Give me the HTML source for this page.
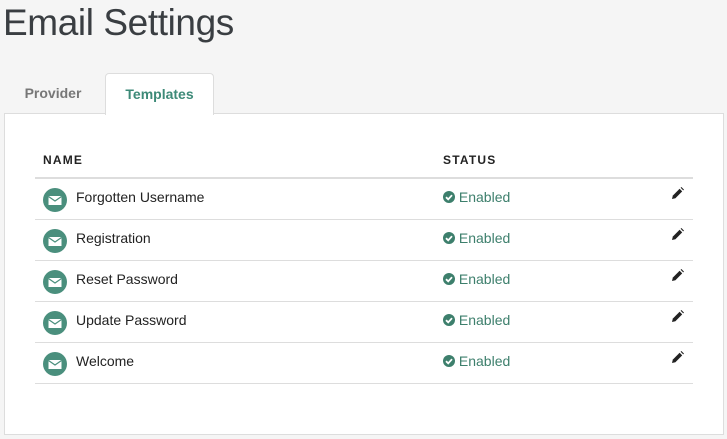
<!DOCTYPE html>
<html><head><style>
body{margin:0;background:#f5f5f5;font-family:"Liberation Sans",sans-serif;width:727px;height:439px;overflow:hidden;position:relative}
h1{position:absolute;left:3px;top:0;margin:0;font-weight:normal;font-size:37px;line-height:46px;color:#3a3e42;letter-spacing:-0.4px}
.tab{position:absolute;top:73px;height:41px;font-size:14px;font-weight:bold;line-height:41px;text-align:center}
.t1{left:4px;width:98px;color:#777}
.t2{left:105px;width:107px;background:#fff;border:1px solid #ddd;border-bottom:none;border-radius:4px 4px 0 0;color:#3d8a78;z-index:2}
.panel{position:absolute;left:4px;top:113px;width:718px;height:320px;background:#fff;border:1px solid #ddd}
.hdr{position:absolute;top:153px;font-size:12px;font-weight:bold;letter-spacing:1.2px;color:#222}
.hline{position:absolute;left:35px;width:658px;top:177px;height:2px;background:#ddd}
.row{position:absolute;left:35px;width:658px;height:40px;border-bottom:1px solid #ddd}
.ic{position:absolute;left:8px;top:9px;width:24px;height:24px;border-radius:50%;background:#4a8f7d}
.nm{position:absolute;left:41px;top:10px;font-size:14px;color:#222}
.st{position:absolute;left:408px;top:10px;font-size:14px;color:#3d7f6c}
.pen{position:absolute;left:636px;top:8px}
</style></head><body>
<h1>Email Settings</h1>
<div class="tab t1">Provider</div>
<div class="tab t2">Templates</div>
<div class="panel"></div>
<div class="hdr" style="left:43px">NAME</div>
<div class="hdr" style="left:443px">STATUS</div>
<div class="hline"></div>
<div class="row" style="top:179px"><div class="ic"><svg width="24" height="24"><rect x="5.5" y="8" width="13" height="9" fill="#fff"/><path d="M5.5 8.5 L12 13 L18.5 8.5" stroke="#4a8f7d" stroke-width="1.2" fill="none"/></svg></div><div class="nm">Forgotten Username</div><div class="st"><svg width="12" height="12" style="vertical-align:-1px"><circle cx="6" cy="6" r="6" fill="#3d7f6c"/><path d="M3 6.2 L5.2 8.3 L9 4.2" stroke="#fff" stroke-width="1.8" fill="none"/></svg> Enabled</div><svg class="pen" width="13" height="13"><path d="M1 12 L1.8 8.6 L8.6 1.8 L11.2 4.4 L4.4 11.2 Z" fill="#222"/><path d="M9.6 0.8 L10.4 0 L13 2.6 L12.2 3.4 Z" fill="#222"/></svg></div>
<div class="row" style="top:220px"><div class="ic"><svg width="24" height="24"><rect x="5.5" y="8" width="13" height="9" fill="#fff"/><path d="M5.5 8.5 L12 13 L18.5 8.5" stroke="#4a8f7d" stroke-width="1.2" fill="none"/></svg></div><div class="nm">Registration</div><div class="st"><svg width="12" height="12" style="vertical-align:-1px"><circle cx="6" cy="6" r="6" fill="#3d7f6c"/><path d="M3 6.2 L5.2 8.3 L9 4.2" stroke="#fff" stroke-width="1.8" fill="none"/></svg> Enabled</div><svg class="pen" width="13" height="13"><path d="M1 12 L1.8 8.6 L8.6 1.8 L11.2 4.4 L4.4 11.2 Z" fill="#222"/><path d="M9.6 0.8 L10.4 0 L13 2.6 L12.2 3.4 Z" fill="#222"/></svg></div>
<div class="row" style="top:261px"><div class="ic"><svg width="24" height="24"><rect x="5.5" y="8" width="13" height="9" fill="#fff"/><path d="M5.5 8.5 L12 13 L18.5 8.5" stroke="#4a8f7d" stroke-width="1.2" fill="none"/></svg></div><div class="nm">Reset Password</div><div class="st"><svg width="12" height="12" style="vertical-align:-1px"><circle cx="6" cy="6" r="6" fill="#3d7f6c"/><path d="M3 6.2 L5.2 8.3 L9 4.2" stroke="#fff" stroke-width="1.8" fill="none"/></svg> Enabled</div><svg class="pen" width="13" height="13"><path d="M1 12 L1.8 8.6 L8.6 1.8 L11.2 4.4 L4.4 11.2 Z" fill="#222"/><path d="M9.6 0.8 L10.4 0 L13 2.6 L12.2 3.4 Z" fill="#222"/></svg></div>
<div class="row" style="top:302px"><div class="ic"><svg width="24" height="24"><rect x="5.5" y="8" width="13" height="9" fill="#fff"/><path d="M5.5 8.5 L12 13 L18.5 8.5" stroke="#4a8f7d" stroke-width="1.2" fill="none"/></svg></div><div class="nm">Update Password</div><div class="st"><svg width="12" height="12" style="vertical-align:-1px"><circle cx="6" cy="6" r="6" fill="#3d7f6c"/><path d="M3 6.2 L5.2 8.3 L9 4.2" stroke="#fff" stroke-width="1.8" fill="none"/></svg> Enabled</div><svg class="pen" width="13" height="13"><path d="M1 12 L1.8 8.6 L8.6 1.8 L11.2 4.4 L4.4 11.2 Z" fill="#222"/><path d="M9.6 0.8 L10.4 0 L13 2.6 L12.2 3.4 Z" fill="#222"/></svg></div>
<div class="row" style="top:343px"><div class="ic"><svg width="24" height="24"><rect x="5.5" y="8" width="13" height="9" fill="#fff"/><path d="M5.5 8.5 L12 13 L18.5 8.5" stroke="#4a8f7d" stroke-width="1.2" fill="none"/></svg></div><div class="nm">Welcome</div><div class="st"><svg width="12" height="12" style="vertical-align:-1px"><circle cx="6" cy="6" r="6" fill="#3d7f6c"/><path d="M3 6.2 L5.2 8.3 L9 4.2" stroke="#fff" stroke-width="1.8" fill="none"/></svg> Enabled</div><svg class="pen" width="13" height="13"><path d="M1 12 L1.8 8.6 L8.6 1.8 L11.2 4.4 L4.4 11.2 Z" fill="#222"/><path d="M9.6 0.8 L10.4 0 L13 2.6 L12.2 3.4 Z" fill="#222"/></svg></div>
</body></html>
